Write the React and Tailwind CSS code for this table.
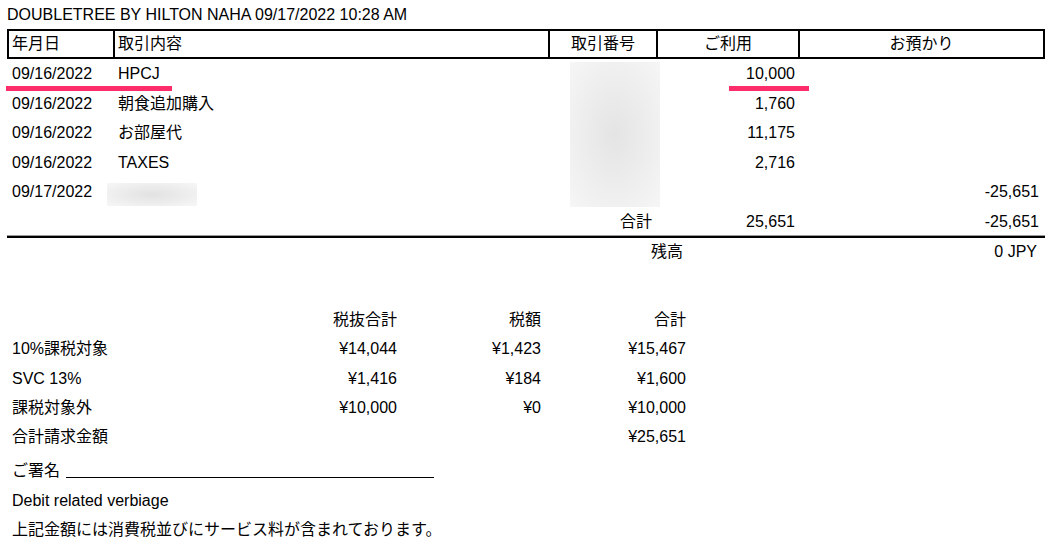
import React from 'react';

const rows = [
  { date: '09/16/2022', desc: 'HPCJ', use: '10,000', dep: '' },
  { date: '09/16/2022', desc: '朝食追加購入', use: '1,760', dep: '' },
  { date: '09/16/2022', desc: 'お部屋代', use: '11,175', dep: '' },
  { date: '09/16/2022', desc: 'TAXES', use: '2,716', dep: '' },
  { date: '09/17/2022', desc: '', use: '', dep: '-25,651' },
];

const taxRows = [
  { label: '10%課税対象', net: '¥14,044', tax: '¥1,423', total: '¥15,467' },
  { label: 'SVC 13%', net: '¥1,416', tax: '¥184', total: '¥1,600' },
  { label: '課税対象外', net: '¥10,000', tax: '¥0', total: '¥10,000' },
  { label: '合計請求金額', net: '', tax: '', total: '¥25,651' },
];

const cols = 'grid grid-cols-[106px_435px_108px_142px_247px]';

const App = () => {
  return (
    <div className="w-[1057px] h-[548px] bg-white text-black text-[16px] leading-[18px] font-['Liberation_Sans','Noto_Sans_CJK_JP',sans-serif] overflow-hidden">
      {/* Title */}
      <div className="h-[29px] pl-[7px] pt-[1px] flex items-center">
        DOUBLETREE BY HILTON NAHA 09/17/2022 10:28 AM
      </div>

      {/* Statement table */}
      <div className="relative ml-[7px] w-[1038px]">
        <div className="grid grid-cols-[104px_435px_108px_142px_245px] h-[30px] border-2 border-black">
          <div className="flex items-center pl-[3px]">年月日</div>
          <div className="flex items-center pl-[3px] border-l-2 border-black">取引内容</div>
          <div className="flex items-center justify-center border-l-2 border-black">取引番号</div>
          <div className="flex items-center justify-center border-l-2 border-black">ご利用</div>
          <div className="flex items-center justify-center border-l-2 border-black">お預かり</div>
        </div>

        {rows.map((r, i) => (
          <div key={i} className={`${cols} h-[29.5px] pt-[1px]`}>
            <div className="flex items-center pl-[5px]">{r.date}</div>
            <div className="flex items-center pl-[5px]">{r.desc}</div>
            <div />
            <div className="flex items-center justify-end pr-[3px]">{r.use}</div>
            <div className="flex items-center justify-end pr-[6px]">{r.dep}</div>
          </div>
        ))}

        <div className={`${cols} h-[29px] pt-[1px]`}>
          <div />
          <div />
          <div className="flex items-center justify-end pr-[4px]">合計</div>
          <div className="flex items-center justify-end pr-[3px]">25,651</div>
          <div className="flex items-center justify-end pr-[6px]">-25,651</div>
        </div>

        <div className="h-[2px] bg-black shadow-[0_-1px_0_#9a9a9a]" />

        <div className={`${cols} h-[28px]`}>
          <div />
          <div />
          <div className="col-span-2 flex items-center pl-[103px]">残高</div>
          <div className="flex items-center justify-end pr-[8px]">0 JPY</div>
        </div>

        {/* Redacted areas */}
        <div className="absolute left-[563px] top-[33px] w-[90px] h-[145px] bg-radial from-[#e4e4e4] via-[#ededed] to-[#f6f6f6]" />
        <div className="absolute left-[100px] top-[154px] w-[90px] h-[23px] bg-radial from-[#e2e2e2] via-[#ececec] to-[#f7f7f7]" />

        {/* Highlight marks */}
        <div className="absolute left-[-1px] top-[57px] w-[166px] h-[5px] bg-[#fd2d6b]" />
        <div className="absolute left-[722px] top-[57px] w-[80px] h-[5px] bg-[#fd2d6b]" />
      </div>

      {/* Tax summary */}
      <div className="mt-[40px] pl-[12px]">
        <div className="grid grid-cols-[238px_147px_144px_145px] h-[29.3px]">
          <div />
          <div className="flex items-center justify-end">税抜合計</div>
          <div className="flex items-center justify-end">税額</div>
          <div className="flex items-center justify-end">合計</div>
        </div>
        {taxRows.map((r, i) => (
          <div key={i} className="grid grid-cols-[238px_147px_144px_145px] h-[29.3px]">
            <div className="flex items-center">{r.label}</div>
            <div className="flex items-center justify-end">{r.net}</div>
            <div className="flex items-center justify-end">{r.tax}</div>
            <div className="flex items-center justify-end">{r.total}</div>
          </div>
        ))}

        <div className="mt-[5px] h-[28px] flex items-center">
          <span>ご署名</span>
          <span className="ml-[6px] inline-block w-[368px] h-[14px] border-b border-black" />
        </div>
        <div className="mt-[2px] h-[29px] flex items-center">Debit related verbiage</div>
        <div className="h-[28px] flex items-center">上記金額には消費税並びにサービス料が含まれております。</div>
      </div>
    </div>
  );
};

export default App;
